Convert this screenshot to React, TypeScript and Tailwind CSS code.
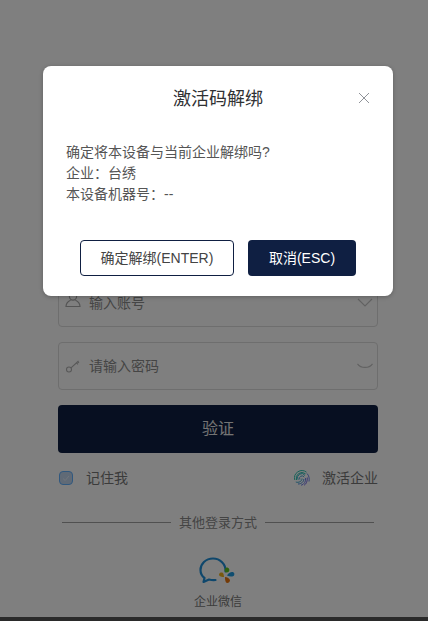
const font = 'font-["Liberation_Sans","Noto_Sans_CJK_SC",sans-serif]';

function UserIcon() {
  return (
    <svg className="-mt-[6px]" width="16" height="16" viewBox="0 0 16 16" fill="none" stroke="#a8a8a8" strokeWidth="1.2">
      <circle cx="8" cy="4.5" r="3.6" />
      <path d="M5.6 8.2 C3 9.4 1 11 1 14.5 H15 C15 11 13 9.4 10.4 8.2" />
    </svg>
  );
}

function KeyIcon() {
  return (
    <svg width="16" height="16" viewBox="0 0 16 16" fill="none" stroke="#b0b0b0" strokeWidth="1.1">
      <circle cx="4" cy="11.500" r="2.500" />
      <path d="M6 9.800 L13.500 3 M11.500 4.800 L13 6.300 M12.800 3.600 L14 4.800" />
    </svg>
  );
}

function ChevronIcon() {
  return (
    <svg width="16" height="9" viewBox="0 0 16 9" fill="none" stroke="#c4c4c4" strokeWidth="1.2">
      <path d="M1 1 L8 8 L15 1" />
    </svg>
  );
}

function EyeClosedIcon() {
  return (
    <svg width="16" height="6" viewBox="0 0 16 6" fill="none" stroke="#c4c4c4" strokeWidth="1.2">
      <path d="M0.5 0.8 C4 5.6 12 5.6 15.5 0.8" />
    </svg>
  );
}

function FingerprintIcon() {
  return (
    <svg width="16" height="16" viewBox="0 0 16 16" fill="none" strokeWidth="1">
      <path d="M0.800 10 A7.400 7.400 0 0 1 12.500 2.200" stroke="#2fc4b2" />
      <path d="M2.500 10 A5.700 5.700 0 0 1 11.500 3.800" stroke="#2fc4b2" />
      <path d="M4.200 9.800 A4 4 0 0 1 11 5.500" stroke="#35b8c8" />
      <path d="M5.900 9.500 A2.300 2.300 0 0 1 10.200 7.200" stroke="#4aa5d8" />
      <path d="M1.800 12 C4.500 13 8 11.500 8 8.500" stroke="#3fa8cf" />
      <path d="M4 14 C7.500 14 10 11.500 9.800 9" stroke="#4a8fe0" />
      <path d="M7 15.300 C10 14.500 12 12 11.600 8" stroke="#6a7fe8" />
      <path d="M10 15.300 C12.500 14 13.500 11 13.300 7.500" stroke="#7a70e8" />
      <path d="M13 3.500 C15 5.500 15.600 8.500 15 11.500" stroke="#6a86e8" />
    </svg>
  );
}

function WeComIcon() {
  return (
    <svg width="38" height="32" viewBox="0 0 38 32" fill="none">
      <path
        d="M26.500 14.500 C27 7 21 1.500 14 1.500 C6.500 1.500 1.500 7 1.500 13 C1.500 17 3.500 19.500 5.500 21 L4.500 25 L10 22.500 C12 23 14.500 23.200 16.500 23"
        stroke="#1f8fd8"
        strokeWidth="2.2"
        strokeLinecap="round"
        strokeLinejoin="round"
      />
      <path d="M26 15 C25 12 26.500 10 28.500 10.500 C30.500 11 31 13.500 29.500 15 C28.500 15.500 27 15.500 26 15 Z" fill="#5cc31f" />
      <path d="M28 18.500 C29 16.500 31.500 15 33 15 C35.500 15 36 17.500 34.500 19 C32.500 20 30 19.500 28 18.500 Z" fill="#1f9ae0" />
      <path d="M26 20 C28 20 30 21 31 23 C31 25.500 28.500 26.500 27 25.500 C26.200 24 26 22 26 20 Z" fill="#e8740c" />
      <path d="M25 20 C23 20 20 19.500 20 17.500 C20.500 15.500 22.500 15 24 16 C24.500 17 25 18.500 25 20 Z" fill="#f2b31a" />
    </svg>
  );
}

export default function App() {
  return (
    <div className={`relative h-[621px] overflow-hidden bg-white ${font}`}>
      <div className="flex h-[617px] flex-col pl-[58px] pr-[50px] pt-[278px]">
        <div className="flex h-[49px] items-center rounded border border-[#dcdcdc] pl-[6px] pr-[4px]">
          <UserIcon />
          <span className="ml-[8px] flex-1 text-sm text-[#8a8a8a]">输入账号</span>
          <ChevronIcon />
        </div>
        <div className="mt-[15px] flex h-[48px] items-center rounded border border-[#dcdcdc] pl-[6px] pr-[4px]">
          <KeyIcon />
          <span className="ml-[8px] flex-1 text-sm text-[#8a8a8a]">请输入密码</span>
          <EyeClosedIcon />
        </div>
        <button className="mt-[15px] h-[48px] rounded bg-[#0f1f42] text-base text-[#e8e8e8]">验证</button>
        <div className="mt-[16px] flex h-[18px] items-center justify-between text-sm text-[#777]">
          <div className="flex items-center">
            <span className="ml-[1px] flex h-[14px] w-[14px] items-center justify-center rounded-sm border border-[#60b0ff] bg-[#c0d4ec]">
              <svg width="8" height="7" viewBox="0 0 8 7" fill="none" stroke="#e4ecf8" strokeWidth="1">
                <path d="M1 3.500 L3.200 5.500 L7 1" />
              </svg>
            </span>
            <span className="ml-[13px]">记住我</span>
          </div>
          <div className="flex items-center">
            <FingerprintIcon />
            <span className="ml-[12px]">激活企业</span>
          </div>
        </div>
        <div className="mt-[26px] flex items-center px-[4px] text-[13px] text-[#888]">
          <span className="h-px flex-1 bg-[#a0a0a0]" />
          <span className="mx-[8px]">其他登录方式</span>
          <span className="h-px flex-1 bg-[#a0a0a0]" />
        </div>
        <div className="mt-[24px] flex flex-col items-center text-xs text-[#777]">
          <WeComIcon />
          <span className="mt-[5px]">企业微信</span>
        </div>
      </div>
      <div className="h-[4px] bg-[#555]" />

      <div className="absolute inset-0 bg-black/50" />

      <div className="absolute left-[43px] top-[66px] h-[230px] w-[350px] rounded-[8px] bg-white shadow-[0_1px_4px_rgba(0,0,0,0.25)]">
        <div className="relative pt-[21px] text-center text-lg leading-[24px] text-[#303133]">
          激活码解绑
          <svg
            className="absolute left-[315px] top-[26px]"
            width="12"
            height="12"
            viewBox="0 0 12 12"
            fill="none"
            stroke="#909399"
            strokeWidth="1"
          >
            <path d="M1 1 L11 11 M11 1 L1 11" />
          </svg>
        </div>
        <div className="mt-[31px] px-[23px] text-sm leading-[21px] text-[#555]">
          <p>确定将本设备与当前企业解绑吗?</p>
          <p>企业：台绣</p>
          <p>本设备机器号：--</p>
        </div>
        <div className="mt-[35px] flex justify-center gap-[14px] text-sm">
          <button className="h-[36px] w-[154px] rounded border border-[#0f1f42] bg-white text-[#444]">
            确定解绑(ENTER)
          </button>
          <button className="h-[36px] w-[108px] rounded bg-[#0f1f42] text-white">取消(ESC)</button>
        </div>
      </div>
    </div>
  );
}
